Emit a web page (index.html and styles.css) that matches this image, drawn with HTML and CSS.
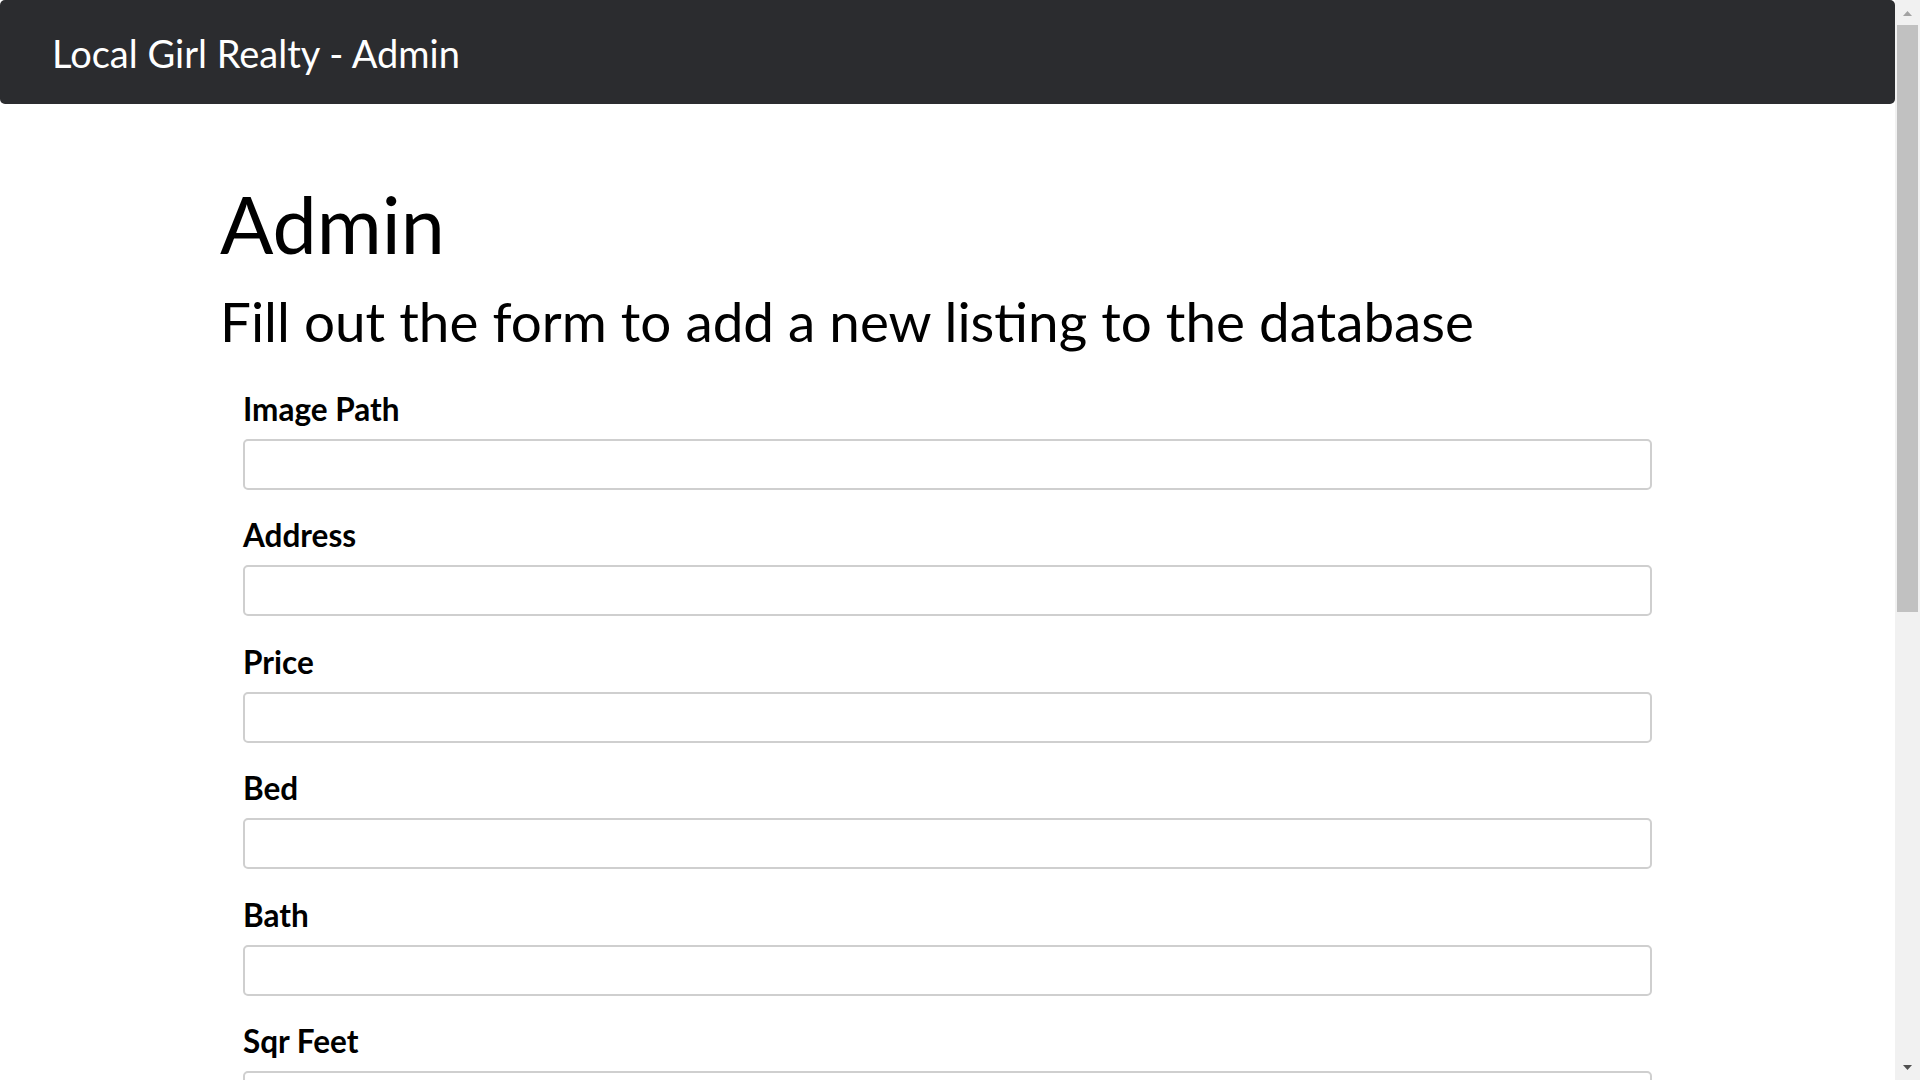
FILE: index.html
```html
<!DOCTYPE html>
<html lang="en">
<head>
<meta charset="utf-8">
<title>Local Girl Realty - Admin</title>
<link rel="stylesheet" href="styles.css">
</head>
<body>
<div class="page">
  <div class="main">
    <nav class="navbar">
      <span class="brand">Local Girl Realty - Admin</span>
    </nav>
    <div class="container">
      <h1 class="title">Admin</h1>
      <h3 class="subtitle">Fill out the form to add a new listing to the database</h3>
      <form class="form">
        <div class="group">
          <label class="label" for="image">Image Path</label>
          <input class="input" id="image" type="text">
        </div>
        <div class="group">
          <label class="label" for="address">Address</label>
          <input class="input" id="address" type="text">
        </div>
        <div class="group">
          <label class="label" for="price">Price</label>
          <input class="input" id="price" type="text">
        </div>
        <div class="group">
          <label class="label" for="bed">Bed</label>
          <input class="input" id="bed" type="text">
        </div>
        <div class="group">
          <label class="label" for="bath">Bath</label>
          <input class="input" id="bath" type="text">
        </div>
        <div class="group">
          <label class="label" for="sqft">Sqr Feet</label>
          <input class="input" id="sqft" type="text">
        </div>
      </form>
    </div>
  </div>
  <div class="scrollbar">
    <svg class="arrow" width="25" height="25" viewBox="0 0 25 25"><polygon points="8,16 12.5,11 17,16" fill="#a3a3a3"/></svg>
    <div class="thumb"></div>
    <div class="track-rest"></div>
    <svg class="arrow" width="25" height="25" viewBox="0 0 25 25"><polygon points="8,10 17,10 12.5,15" fill="#505050"/></svg>
  </div>
</div>
</body>
</html>
```

FILE: styles.css
```css
html, body {
  margin: 0;
  padding: 0;
  overflow: hidden;
  background: #ffffff;
}

body {
  font-family: "Lato", "Open Sans", sans-serif;
  color: #000000;
}

.page {
  display: flex;
  width: 1920px;
  height: 1080px;
}

.main {
  flex: 1 1 auto;
  min-width: 0;
  overflow: hidden;
}

.navbar {
  height: 104px;
  box-sizing: border-box;
  padding: 3px 0 0 52px;
  background: #2b2c2f;
  border-radius: 5px;
  display: flex;
  align-items: flex-start;
}

.brand {
  color: #ffffff;
  font-size: 38px;
  line-height: 101px;
  font-weight: 400;
}

.container {
  padding: 72.5px 216px 0 220px;
}

.title {
  margin: 0;
  font-size: 79px;
  line-height: 1.2;
  font-weight: 400;
}

.subtitle {
  margin: 18px 0 0 0;
  font-size: 54.8px;
  line-height: 1.2;
  font-weight: 400;
}

.form {
  margin: 33.5px 27px 0 23px;
}

.group {
  display: flex;
  flex-direction: column;
  margin-bottom: 25.5px;
}

.label {
  font-size: 31.5px;
  line-height: 40px;
  font-weight: 700;
  margin-bottom: 10px;
}

.input {
  display: block;
  box-sizing: border-box;
  width: 100%;
  height: 51px;
  margin: 0;
  padding: 0 14px;
  border: 2px solid #cfcfcf;
  border-radius: 5px;
  background: #ffffff;
  font-family: inherit;
  font-size: 30px;
  outline: none;
}

.scrollbar {
  flex: 0 0 25px;
  width: 25px;
  display: flex;
  flex-direction: column;
  background: #f1f1f1;
}

.arrow {
  display: block;
  flex: 0 0 25px;
}

.thumb {
  height: 587px;
  margin: 0 2px;
  background: #c1c1c1;
}

.track-rest {
  flex: 1 1 auto;
}
```
